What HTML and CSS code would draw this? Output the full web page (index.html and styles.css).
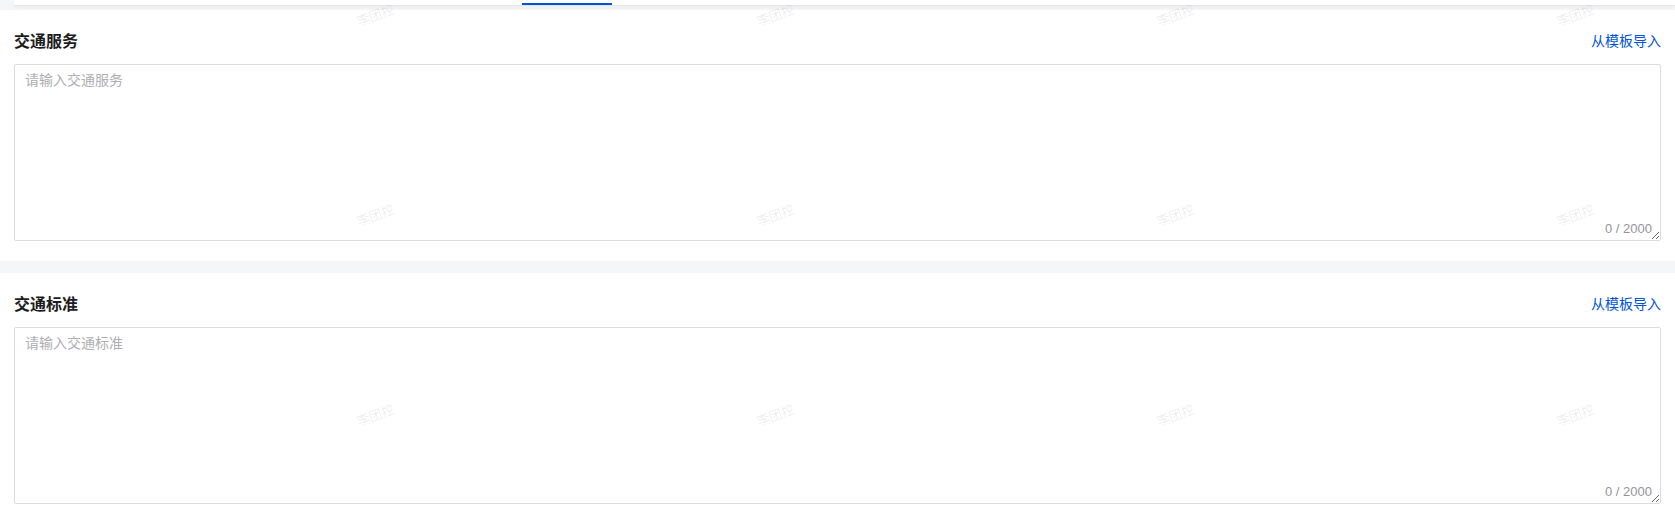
FILE: index.html
```html
<!DOCTYPE html>
<html lang="zh-CN">
<head>
<meta charset="utf-8">
<title>交通</title>
<link rel="stylesheet" href="styles.css">
</head>
<body>
<div class="page">
  <div class="tabbar"><span class="tab-ink"></span></div>

  <section class="panel">
    <div class="panel-head">
      <h3 class="panel-title">交通服务</h3>
      <a class="panel-link" href="#">从模板导入</a>
    </div>
    <div class="field">
      <textarea class="field-input" placeholder="请输入交通服务"></textarea>
      <span class="field-count">0 / 2000</span>
    </div>
  </section>

  <section class="panel panel-gap">
    <div class="panel-head">
      <h3 class="panel-title">交通标准</h3>
      <a class="panel-link" href="#">从模板导入</a>
    </div>
    <div class="field">
      <textarea class="field-input" placeholder="请输入交通标准"></textarea>
      <span class="field-count">0 / 2000</span>
    </div>
  </section>

  <div class="watermarks">
    <span class="wm">李团控</span><span class="wm">李团控</span><span class="wm">李团控</span><span class="wm">李团控</span>
    <span class="wm">李团控</span><span class="wm">李团控</span><span class="wm">李团控</span><span class="wm">李团控</span>
    <span class="wm">李团控</span><span class="wm">李团控</span><span class="wm">李团控</span><span class="wm">李团控</span>
  </div>
</div>
</body>
</html>
```

FILE: styles.css
```css
* {
  box-sizing: border-box;
}

html, body {
  margin: 0;
  padding: 0;
  background: #f5f6f7;
}

body {
  font-family: "Noto Sans CJK SC", "Noto Sans", "Liberation Sans", sans-serif;
  color: #1f1f1f;
}

.page {
  position: relative;
  width: 1675px;
  height: 521px;
  overflow: hidden;
  background: #f5f6f7;
}

.tabbar {
  display: flex;
  margin-left: 14px;
  height: 6px;
  padding-left: 508px;
  background: #ffffff;
  border-bottom: 1px solid #e6e7e9;
  box-shadow: 0 1px 4px rgba(0, 0, 0, 0.05);
  margin-bottom: 4px;
}

.tab-ink {
  display: block;
  width: 90px;
  height: 2px;
  margin-top: 3px;
  background: #0052d9;
}

.panel {
  background: #ffffff;
  padding: 18px 14px 20px 14px;
}

.panel-gap {
  margin-top: 12px;
}

.panel-head {
  display: flex;
  align-items: center;
  justify-content: space-between;
  height: 24px;
  margin-bottom: 12px;
}

.panel-title {
  margin: 0;
  font-size: 16px;
  line-height: 24px;
  font-weight: 600;
  color: #1d1d1d;
}

.panel-link {
  font-size: 14px;
  line-height: 24px;
  color: #0052d9;
  text-decoration: none;
}

.field {
  position: relative;
  display: flex;
}

.field-input {
  display: block;
  width: 100%;
  height: 177px;
  margin: 0;
  padding: 3px 10px;
  border: 1px solid #dcdce2;
  border-radius: 2px;
  font-family: "Noto Sans CJK SC", "Noto Sans", sans-serif;
  font-size: 14px;
  line-height: 22px;
  color: #1d1d1d;
  background: #ffffff;
  resize: vertical;
  outline: none;
}

.field-input::placeholder {
  color: #aeaeb2;
}

.field-count {
  position: absolute;
  right: 9px;
  bottom: 2px;
  font-family: "Liberation Sans", Arial, sans-serif;
  font-size: 13px;
  line-height: 20px;
  color: #949498;
}

.watermarks {
  position: absolute;
  top: -85px;
  left: 176px;
  display: grid;
  grid-template-columns: repeat(4, 400px);
  grid-auto-rows: 200px;
  place-items: center;
  pointer-events: none;
}

.wm {
  display: block;
  font-size: 13px;
  line-height: 16px;
  color: rgba(0, 0, 0, 0.09);
  transform: rotate(-20deg);
  white-space: nowrap;
}
```
